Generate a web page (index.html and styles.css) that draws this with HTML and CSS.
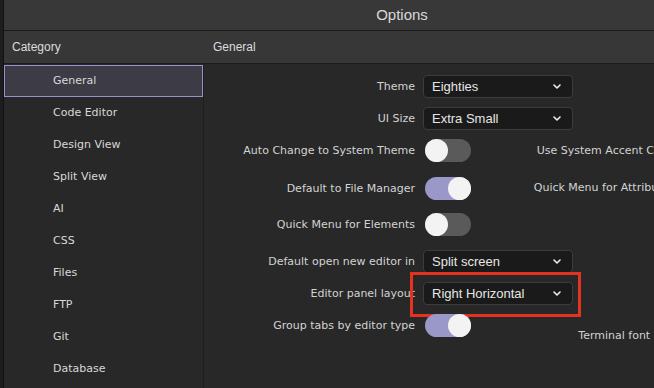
FILE: index.html
```html
<!DOCTYPE html>
<html lang="en">
<head>
    <meta charset="UTF-8">
    <meta name="viewport" content="width=device-width, initial-scale=1.0">
    <title>Options</title>
    <link rel="stylesheet" href="styles.css">
</head>
<body>
    <div class="window">
        <div class="edge"></div>
        <div class="dialog">
            <header class="titlebar">Options</header>
            <div class="head">
                <div class="head-cat">Category</div>
                <div class="head-page">General</div>
            </div>
            <div class="body">
                <ul class="cats">
                    <li class="selected">General</li>
                    <li>Code Editor</li>
                    <li>Design View</li>
                    <li>Split View</li>
                    <li>AI</li>
                    <li>CSS</li>
                    <li>Files</li>
                    <li>FTP</li>
                    <li>Git</li>
                    <li>Database</li>
                </ul>
                <main class="page">
                    <div class="col col-main">
                        <div class="row">
                            <label>Theme</label>
                            <div class="select">Eighties <svg class="chev" viewBox="0 0 8 5"><path d="M1 1l3 3 3-3"/></svg></div>
                        </div>
                        <div class="row">
                            <label>UI Size</label>
                            <div class="select">Extra Small <svg class="chev" viewBox="0 0 8 5"><path d="M1 1l3 3 3-3"/></svg></div>
                        </div>
                        <div class="row">
                            <label>Auto Change to System Theme</label>
                            <div class="toggle"></div>
                        </div>
                        <div class="row mt6">
                            <label>Default to File Manager</label>
                            <div class="toggle on"></div>
                        </div>
                        <div class="row mt4">
                            <label>Quick Menu for Elements</label>
                            <div class="toggle"></div>
                        </div>
                        <div class="row mt5">
                            <label>Default open new editor in</label>
                            <div class="select">Split screen <svg class="chev" viewBox="0 0 8 5"><path d="M1 1l3 3 3-3"/></svg></div>
                        </div>
                        <div class="row marked">
                            <label>Editor panel layout</label>
                            <div class="select">Right Horizontal <svg class="chev" viewBox="0 0 8 5"><path d="M1 1l3 3 3-3"/></svg></div>
                            <div class="mark"></div>
                        </div>
                        <div class="row">
                            <label>Group tabs by editor type</label>
                            <div class="toggle on"></div>
                        </div>
                    </div>
                    <div class="col col-side">
                        <div class="row"></div>
                        <div class="row"></div>
                        <div class="row"><label>Use System Accent Color</label></div>
                        <div class="row mt5"><label>Quick Menu for Attributes</label></div>
                        <div class="row terminal"><label>Terminal font size</label></div>
                    </div>
                </main>
            </div>
        </div>
    </div>
</body>
</html>
```

FILE: styles.css
```css
html, body {
    margin: 0;
    width: 654px;
    height: 388px;
    overflow: hidden;
    background: #1c1c1c;
}
.window {
    display: flex;
    height: 388px;
}
.edge {
    flex: none;
    width: 3px;
    background: #1d1d1f;
    border-right: 1px solid #121212;
}
.dialog {
    flex: none;
    width: 796px;
    display: flex;
    flex-direction: column;
    background: #282828;
}
.titlebar {
    height: 30px;
    font: 15px "Liberation Sans", Arial, sans-serif;
    line-height: 30px;
    text-align: center;
    background: #383838;
    border-bottom: 1px solid #1b1b1b;
    color: #d9d9d9;
}
.head {
    height: 32px;
    display: flex;
    align-items: center;
    background: #373737;
    border-bottom: 1px solid #1b1b1b;
    color: #dcdcdc;
    font: 12px "Liberation Sans", Arial, sans-serif;
}
.head-cat {
    width: 192px;
    padding-left: 8px;
}
.head-page {
    padding-left: 9px;
}
.body {
    flex: 1;
    display: flex;
    font: 11px "DejaVu Sans", Verdana, sans-serif;
}
.cats {
    flex: none;
    width: 199px;
    margin: 0;
    padding: 1px 0 0;
    list-style: none;
    border-right: 1px solid #1e1e1e;
    background: #282828;
}
.cats li {
    height: 32px;
    line-height: 30px;
    padding-left: 48px;
    color: #d8d8d8;
    border: 1px solid transparent;
    box-sizing: border-box;
}
.cats li.selected {
    background: #3d3c46;
    border-color: #9593c9;
}
.page {
    flex: 1;
    display: flex;
    padding-top: 6px;
}
.col-main {
    flex: none;
    width: 276px;
}
.col-side {
    flex: none;
    width: 195px;
}
.row {
    height: 32px;
    display: flex;
    align-items: center;
    color: #d3d3d3;
}
.col-main label {
    flex: none;
    width: 211px;
    margin-right: 8px;
    text-align: right;
    white-space: nowrap;
}
.col-side .row {
    justify-content: flex-end;
    white-space: nowrap;
}
.mt4 { margin-top: 4px; }
.mt5 { margin-top: 5px; }
.mt6 { margin-top: 6px; }
.terminal { margin-top: 116px; }
.select {
    flex: none;
    width: 150px;
    height: 23px;
    box-sizing: border-box;
    display: flex;
    align-items: center;
    justify-content: space-between;
    padding: 0 11px 0 8px;
    background: #1a1a1a;
    border: 1px solid #3c3c3c;
    border-radius: 4px;
    color: #e6e6e6;
    font: 13px "Liberation Sans", Arial, sans-serif;
}
.chev {
    width: 8px;
    height: 5px;
    fill: none;
    stroke: #eeeeee;
    stroke-width: 1.6;
    stroke-linecap: round;
    stroke-linejoin: round;
}
.toggle {
    flex: none;
    position: relative;
    width: 46px;
    height: 23px;
    margin-left: 2px;
    border-radius: 12px;
    background: #5a5a5a;
}
.toggle::after {
    content: "";
    position: absolute;
    top: 0;
    left: 0;
    width: 23px;
    height: 23px;
    border-radius: 50%;
    background: #f3f3f3;
}
.toggle.on {
    background: #9a97c9;
}
.toggle.on::after {
    left: auto;
    right: 0;
}
.marked {
    position: relative;
}
.mark {
    position: absolute;
    left: 206px;
    top: -5px;
    width: 171px;
    height: 45px;
    box-sizing: border-box;
    border: 3px solid #e5311f;
}
```
